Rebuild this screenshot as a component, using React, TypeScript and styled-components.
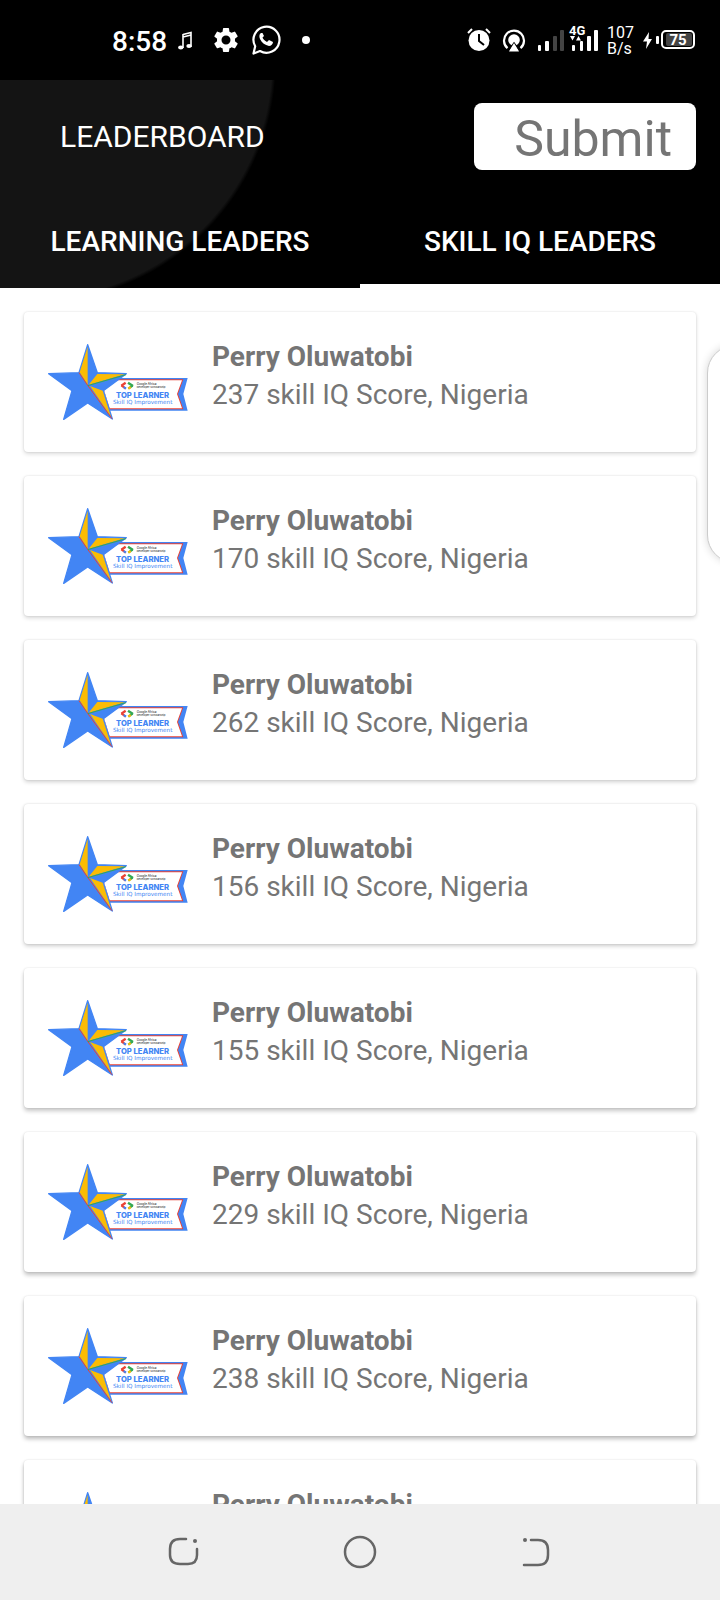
import React from "react";
import styled, { createGlobalStyle } from "styled-components";

const GlobalStyle = createGlobalStyle`
  * { box-sizing: border-box; }
  body { margin: 0; background: #fff; font-family: Roboto, "Liberation Sans", sans-serif; }
  button { font-family: inherit; border: 0; padding: 0; cursor: pointer; }
`;

const Screen = styled.div`
  position: relative;
  display: flex;
  flex-direction: column;
  height: 100vh;
  overflow: hidden;
`;

const StatusBar = styled.header`
  display: flex;
  justify-content: space-between;
  align-items: center;
  flex: none;
  height: 80px;
  padding: 0 24px 0 112px;
  background: #000;
  color: #fff;
`;

const StatusGroup = styled.div<{ $gap: number }>`
  display: flex;
  align-items: center;
  gap: ${(p) => p.$gap}px;
`;

const Clock = styled.span`
  padding-top: 3px;
  font-size: 28px;
  font-weight: 500;
  line-height: 32px;
`;

const NetSpeed = styled.span`
  padding-top: 2px;
  font-size: 16px;
  font-weight: 400;
  line-height: 16px;
`;

const AppBar = styled.div`
  flex: none;
  background: radial-gradient(circle at 35px -19px, #141414 237px, #000 241px);
`;

const Toolbar = styled.div`
  display: flex;
  justify-content: space-between;
  align-items: center;
  height: 112px;
  padding: 0 24px 0 60px;
`;

const Title = styled.h1`
  margin: 0;
  padding-top: 2px;
  color: #fff;
  font-size: 30px;
  font-weight: 400;
  line-height: 40px;
`;

const SubmitButton = styled.button`
  height: 67px;
  padding: 6px 24px 0 40px;
  border-radius: 8px;
  background: #fff;
  color: #757575;
  font-size: 50px;
  line-height: 61px;
`;

const Tabs = styled.div`
  display: flex;
  height: 96px;
`;

const Tab = styled.button<{ $active?: boolean }>`
  flex: 1;
  padding-top: 2px;
  background: transparent;
  border-top: 4px solid transparent;
  border-bottom: 4px solid ${(p) => (p.$active ? "#fff" : "transparent")};
  color: #fff;
  font-size: 28px;
  font-weight: 500;
`;

const List = styled.ul`
  display: flex;
  flex-direction: column;
  gap: 24px;
  flex: 1;
  min-height: 0;
  margin: 0;
  padding: 24px;
  list-style: none;
  overflow-y: auto;
  scrollbar-width: none;
`;

const Card = styled.li<{ $depth: number }>`
  display: flex;
  gap: 24px;
  flex: none;
  height: 140px;
  padding: 24px;
  border-radius: 4px;
  background: #fff;
  box-shadow: 0 ${(p) => (p.$depth > 3 ? 3 : 2)}px 4px rgba(0, 0, 0, ${(p) => 0.14 + p.$depth * 0.02}),
    0 0 2px rgba(0, 0, 0, 0.12);
`;

const BadgeArt = styled.svg`
  flex: none;
  width: 140px;
  height: 76px;
  margin-top: 8px;
`;

const Details = styled.div`
  padding-top: 2px;
  color: #757575;
  font-size: 28px;
  line-height: 38px;
`;

const Name = styled.h2`
  margin: 0;
  font-size: 28px;
  font-weight: 700;
`;

const Score = styled.p`
  margin: 0;
`;

const EdgePanel = styled.div`
  position: absolute;
  top: 345px;
  right: -43px;
  width: 56px;
  height: 218px;
  border: 1px solid #ccc;
  border-radius: 28px;
  background: #fff;
  box-shadow: 0 0 8px rgba(0, 0, 0, 0.16);
`;

const NavBar = styled.nav`
  display: flex;
  justify-content: center;
  align-items: center;
  gap: 128px;
  flex: none;
  height: 96px;
  background: #efefef;
`;

const NavButton = styled.button`
  width: 48px;
  height: 48px;
  background: transparent;

  svg { display: block; }
`;

function Badge() {
  return (
    <BadgeArt viewBox="24 42 420 228" role="img" aria-label="Top learner badge">
      <path d="M232 144H443L430 192L443 242H209L192 180Z" fill="#4285f4" />
      <path d="M230 148H430L414 192L430 238H209L192 180Z" fill="#ea4335" />
      <path d="M228 151H426L411 192L426 235H209L192 180Z" fill="#fff" />
      <path d="M143 44L172 128L259 131L190 182L217 267L143 219L71 268L96 182L26 131L117 128Z" fill="#4285f4" stroke="#4285f4" strokeWidth="4" strokeLinejoin="round" />
      <path d="M143 50V164L119 127ZM146 164L172 132L254 133ZM150 168L188 182L213 260Z" fill="#fbbc04" />
      <path d="M117 128L143 166L216 266" fill="none" stroke="#ea4335" strokeWidth="3" />
      <path d="M143 167L258 134" stroke="#34a853" strokeWidth="3" />
      <path d="M257 158L244 167" stroke="#ea4335" strokeWidth="7" />
      <path d="M244 166L257 176" stroke="#ea4335" strokeWidth="6" />
      <path d="M251 171L258 176" stroke="#4285f4" strokeWidth="6" />
      <path d="M264 158L279 168" stroke="#34a853" strokeWidth="7" />
      <path d="M278 167L265 176" stroke="#34a853" strokeWidth="6" />
      <path d="M272 171L265 176" stroke="#fbbc04" strokeWidth="7" />
      <g fontFamily="Inter, sans-serif">
        <text x="290" y="164" fontSize="9" fontWeight="500" fill="#333">Google Africa</text>
        <text x="290" y="175" fontSize="8" fontWeight="500" fill="#333">Developer Scholarship</text>
        <text x="228" y="203" fontSize="23" fontWeight="800" fill="#4285f4">TOP LEARNER</text>
        <text x="219" y="221" fontSize="17" fontWeight="400" fontFamily="'DejaVu Sans', sans-serif" fill="#4285f4">Skill IQ Improvement</text>
      </g>
    </BadgeArt>
  );
}

function NotificationIcons() {
  return (
    <svg width="136" height="40" viewBox="176 20 136 40" fill="#fff" aria-hidden="true">
      <path d="M184 34.500L192 32.500V47M184 34V48M184 37L192 35" fill="none" stroke="#fff" strokeWidth="1.600" />
      <ellipse cx="181.800" cy="47.500" rx="2.700" ry="2" />
      <ellipse cx="190" cy="46" rx="2.700" ry="2" />
      <path transform="translate(212 25) scale(1.250)" d="M19.140 12.940c.04-.3.060-.61.060-.94 0-.32-.02-.64-.07-.94l2.030-1.580a.49.49 0 0 0 .12-.61l-1.920-3.320a.488.488 0 0 0-.59-.22l-2.390.96c-.5-.38-1.030-.7-1.620-.94l-.36-2.540a.484.484 0 0 0-.48-.41h-3.840c-.24 0-.43.17-.47.41l-.36 2.540c-.59.24-1.130.57-1.620.94l-2.390-.96c-.22-.08-.47 0-.59.22L2.740 8.870c-.12.21-.08.47.12.61l2.030 1.580c-.05.3-.09.63-.09.94s.02.64.07.94l-2.030 1.580a.49.49 0 0 0-.12.61l1.920 3.320c.12.22.37.29.59.22l2.390-.96c.5.38 1.030.7 1.620.94l.36 2.540c.05.24.24.41.48.41h3.840c.24 0 .44-.17.47-.41l.36-2.540c.59-.24 1.130-.56 1.620-.94l2.390.96c.22.08.47 0 .59-.22l1.920-3.320c.12-.22.07-.47-.12-.61zM12 15.600A3.600 3.600 0 1 1 12 8.400a3.600 3.600 0 0 1 0 7.200" />
      <path d="M254.500 53.500L256.200 46.200A13 13 0 1 1 261 51Z" fill="none" stroke="#fff" strokeWidth="2.200" strokeLinejoin="round" />
      <path d="M262 33C260 34 260 37 261 39C263 43 266 45 270 46C272 46 274 44 274 42L270 40L268 42C266 41 264 39 263.500 37.500L265 36L263.500 33Z" />
      <circle cx="307" cy="40" r="4" />
    </svg>
  );
}

function AlarmHotspotSignalIcons() {
  return (
    <svg width="134" height="40" viewBox="466 20 134 40" fill="#fff" aria-hidden="true">
      <circle cx="480" cy="40.500" r="10.500" />
      <path d="M480 34V41L485 45" fill="none" stroke="#000" strokeWidth="2" />
      <path d="M469 33L473 29M491 33L487 29" stroke="#fff" strokeWidth="2" />
      <path d="M508.500 48.200A10 10 0 1 1 521.500 48.200" fill="none" stroke="#fff" strokeWidth="2.200" />
      <circle cx="515" cy="40" r="5.800" />
      <path d="M515 43L521 51.500H509Z" stroke="#000" strokeWidth="1.500" />
      <path d="M515 43L520 51.500H510Z" />
      <rect x="539" y="45" width="3" height="6" rx="1" />
      <rect x="546" y="41" width="4" height="10" rx="1" />
      <rect x="554" y="36" width="4" height="15" rx="1" fill="#444" />
      <rect x="561" y="30" width="4" height="21" rx="1" fill="#444" />
      <rect x="573" y="45" width="3" height="6" rx="1" />
      <rect x="581" y="41" width="3" height="10" rx="1" />
      <rect x="588" y="36" width="4" height="15" rx="1" />
      <rect x="595" y="30" width="4" height="21" rx="1" />
      <path d="M571 36H576L573.500 40.500ZM577 40.500H582L579.500 36Z" />
      <text x="570" y="35" fontSize="13" fontWeight="700" fontFamily="Roboto, sans-serif">4G</text>
    </svg>
  );
}

function BatteryIcon() {
  return (
    <svg width="54" height="40" viewBox="642 20 54 40" fill="#fff" aria-hidden="true">
      <path d="M649 32L643 41.500H647L646 49L652 39H648.500Z" />
      <rect x="656" y="36" width="3" height="8" rx="1" />
      <rect x="662" y="31" width="32" height="17" rx="4" fill="none" stroke="#fff" strokeWidth="2" />
      <rect x="666" y="33" width="26" height="13" rx="2" fill="#444" />
      <text x="678" y="45" textAnchor="middle" fontSize="15" fontWeight="700" fontFamily="Roboto, sans-serif">75</text>
    </svg>
  );
}

const scores = [237, 170, 262, 156, 155, 229, 238, 220];

export default function App() {
  return (
    <Screen>
      <GlobalStyle />
      <StatusBar>
        <StatusGroup $gap={8}>
          <Clock>8:58</Clock>
          <NotificationIcons />
        </StatusGroup>
        <StatusGroup $gap={8}>
          <AlarmHotspotSignalIcons />
          <NetSpeed>107<br />B/s</NetSpeed>
          <BatteryIcon />
        </StatusGroup>
      </StatusBar>
      <AppBar>
        <Toolbar>
          <Title>LEADERBOARD</Title>
          <SubmitButton type="button">Submit</SubmitButton>
        </Toolbar>
        <Tabs role="tablist">
          <Tab type="button" role="tab" aria-selected={false}>LEARNING LEADERS</Tab>
          <Tab type="button" role="tab" aria-selected $active>SKILL IQ LEADERS</Tab>
        </Tabs>
      </AppBar>
      <List>
        {scores.map((score, index) => (
          <Card key={index} $depth={index}>
            <Badge />
            <Details>
              <Name>Perry Oluwatobi</Name>
              <Score>{score} skill IQ Score, Nigeria</Score>
            </Details>
          </Card>
        ))}
      </List>
      <EdgePanel />
      <NavBar>
        <NavButton type="button" aria-label="Recent apps">
          <svg width="48" height="48" viewBox="160 1528 48 48" fill="none" stroke="#666" strokeWidth="2.500" strokeLinecap="round">
            <path d="M186 1539H180Q170 1539 170 1549V1555Q170 1564 180 1564H188Q197 1564 197 1555V1549" />
            <circle cx="195" cy="1541" r="2" fill="#666" stroke="none" />
          </svg>
        </NavButton>
        <NavButton type="button" aria-label="Home">
          <svg width="48" height="48" viewBox="336 1528 48 48" fill="none" stroke="#666" strokeWidth="2.500">
            <circle cx="360" cy="1552" r="15" />
          </svg>
        </NavButton>
        <NavButton type="button" aria-label="Back">
          <svg width="48" height="48" viewBox="512 1528 48 48" fill="none" stroke="#666" strokeWidth="2.500" strokeLinecap="round">
            <path d="M531 1540H538Q548 1540 548 1550V1555Q548 1565 538 1565H524" />
            <circle cx="525" cy="1540" r="2" fill="#666" stroke="none" />
          </svg>
        </NavButton>
      </NavBar>
    </Screen>
  );
}
